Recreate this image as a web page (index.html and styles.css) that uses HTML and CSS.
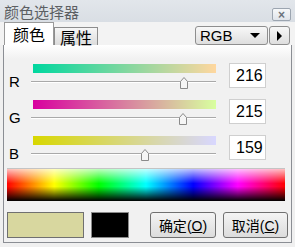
FILE: index.html
```html
<!DOCTYPE html>
<html>
<head>
    <link rel="stylesheet" href="styles.css">
</head>
<body>
    <div class="window">
        <div class="titlebar">
            <span class="title">颜色选择器</span>
            <button class="close-button">×</button>
        </div>

        <div class="tabbar">
            <div class="tab active">颜色</div>
            <div class="tab">属性</div>
            <div class="tab-fill"></div>
            <div class="mode-select">
                <span>RGB</span>
                <span class="caret"></span>
            </div>
            <div class="mode-next"><span class="play"></span></div>
        </div>

        <div class="panel">
            <div class="channels">
                <div class="channel">
                    <span class="channel-label">R</span>
                    <div class="slider">
                        <div class="ramp" style="background: linear-gradient(to right, rgb(0,215,159), rgb(255,215,159));"></div>
                        <div class="track">
                            <svg class="thumb" style="left: 149px;" viewBox="0 0 8 12"><path d="M0.5 4.5 L4 0.5 L7.5 4.5 V11.5 H0.5 Z"/></svg>
                        </div>
                    </div>
                    <div class="value">216</div>
                </div>
                <div class="channel">
                    <span class="channel-label">G</span>
                    <div class="slider">
                        <div class="ramp" style="background: linear-gradient(to right, rgb(216,0,159), rgb(216,255,159));"></div>
                        <div class="track">
                            <svg class="thumb" style="left: 148px;" viewBox="0 0 8 12"><path d="M0.5 4.5 L4 0.5 L7.5 4.5 V11.5 H0.5 Z"/></svg>
                        </div>
                    </div>
                    <div class="value">215</div>
                </div>
                <div class="channel">
                    <span class="channel-label">B</span>
                    <div class="slider">
                        <div class="ramp" style="background: linear-gradient(to right, rgb(216,215,0), rgb(216,215,255));"></div>
                        <div class="track">
                            <svg class="thumb" style="left: 110px;" viewBox="0 0 8 12"><path d="M0.5 4.5 L4 0.5 L7.5 4.5 V11.5 H0.5 Z"/></svg>
                        </div>
                    </div>
                    <div class="value">159</div>
                </div>
            </div>

            <div class="spectrum"></div>

            <div class="footer">
                <div class="swatch current" style="background: rgb(216,215,159);"></div>
                <div class="swatch previous" style="background: #000;"></div>
                <div class="buttons">
                    <button class="dialog-button ok">确定<span class="key">(<u>O</u>)</span></button>
                    <button class="dialog-button cancel">取消<span class="key">(<u>C</u>)</span></button>
                </div>
            </div>
        </div>
    </div>
</body>
</html>
```

FILE: styles.css
```css
body {
    margin: 0;
    font-family: "Noto Sans CJK SC", "Liberation Sans", sans-serif;
    background-color: #f0f0f0;
}
.window {
    width: 295px;
    height: 247px;
    overflow: hidden;
    background-color: #f0f0f0;
}
.titlebar {
    height: 22px;
    display: flex;
    align-items: flex-start;
    justify-content: space-between;
    background: linear-gradient(#e2e6eb, #d9dee4);
}
.title {
    margin: 2px 0 0 4px;
    font-size: 15px;
    line-height: 20px;
    color: #5c5f63;
}
.close-button {
    margin: 8px 4px 0 0;
    width: 19px;
    height: 13px;
    padding: 0;
    border: 1px solid #9ca5b0;
    border-radius: 2px;
    background: linear-gradient(#f6f8fa, #dfe4ea);
    color: #6b737c;
    font-family: "Liberation Sans", sans-serif;
    font-size: 12px;
    line-height: 10px;
    font-weight: bold;
}
.tabbar {
    height: 23px;
    display: flex;
    align-items: flex-end;
    padding: 0 5px 0 4px;
    background-color: #f3f3f3;
    margin-bottom: -1px;
    position: relative;
}
.tab {
    height: 18px;
    width: 44px;
    box-sizing: border-box;
    border: 1px solid #8d8d8d;
    border-bottom: none;
    background: linear-gradient(#f6f6f6, #dcdcdc);
    font-size: 16px;
    line-height: 18px;
    text-align: center;
    color: #000;
}
.tab.active {
    width: 50px;
    height: 23px;
    line-height: 22px;
    background: #fff;
    border-color: #9a9a9a;
    position: relative;
    z-index: 1;
}
.tab-fill {
    flex: 1;
}
.mode-select {
    width: 73px;
    height: 19px;
    margin-bottom: 0;
    box-sizing: border-box;
    border: 1px solid #8e8e8e;
    border-radius: 3px;
    background: linear-gradient(#f8f8f8, #dedede);
    display: flex;
    align-items: center;
    justify-content: space-between;
    padding: 0 7px 0 4px;
    font-family: "Liberation Sans", sans-serif;
    font-size: 15px;
}
.caret {
    width: 0;
    height: 0;
    border-left: 5px solid transparent;
    border-right: 5px solid transparent;
    border-top: 5px solid #000;
}
.mode-next {
    width: 21px;
    height: 19px;
    margin-left: 1px;
    box-sizing: border-box;
    border: 1px solid #8e8e8e;
    border-radius: 3px;
    background: linear-gradient(#f8f8f8, #dedede);
    display: flex;
    align-items: center;
    justify-content: center;
}
.play {
    width: 0;
    height: 0;
    border-top: 5px solid transparent;
    border-bottom: 5px solid transparent;
    border-left: 5px solid #000;
}
.panel {
    margin: 0 3px;
    height: 199px;
    box-sizing: border-box;
    border: 1px solid #8b8e94;
    background: linear-gradient(#ffffff 0, #f1f1f1 14px);
}
.channels {
    display: flex;
    flex-direction: column;
    gap: 11px;
    padding: 18px 0 0 5px;
}
.channel {
    display: grid;
    grid-template-columns: 11px 183px 37px;
    column-gap: 13px;
    height: 25px;
}
.channel-label {
    padding-top: 11px;
    font-family: "Liberation Sans", sans-serif;
    font-size: 15px;
    line-height: 16px;
}
.ramp {
    margin-top: 1px;
    height: 9px;
}
.track {
    position: relative;
    height: 10px;
    margin-left: -2px;
    border-bottom: 1px solid #fff;
    box-shadow: inset 0 -1px 0 #a9a9a9;
    box-sizing: border-box;
}
.thumb {
    position: absolute;
    top: 4px;
    width: 8px;
    height: 12px;
    fill: #f5f5f5;
    stroke: #8a8a8a;
    stroke-width: 1;
}
.value {
    box-sizing: border-box;
    height: 25px;
    border: 1px solid #cfcfcf;
    background: #fff;
    padding-left: 6px;
    font-family: "Liberation Sans", sans-serif;
    font-size: 16px;
    line-height: 23px;
}
.spectrum {
    margin: 8px 6px 0 3px;
    height: 33px;
    border-top: 1px solid #c4c4c4;
    box-sizing: border-box;
    background:
        linear-gradient(rgba(255,255,255,0.75) 0%, rgba(255,255,255,0) 45%, rgba(0,0,0,0) 55%, #000 100%),
        linear-gradient(to right, #f00 0%, #ff0 17%, #0f0 33%, #0ff 50%, #00f 67%, #f0f 83%, #f00 100%);
}
.footer {
    display: flex;
    align-items: center;
    margin: 11px 3px 0 3px;
}
.swatch {
    height: 26px;
    box-sizing: border-box;
    border: 1px solid #707070;
}
.swatch.current {
    width: 77px;
}
.swatch.previous {
    width: 38px;
    margin-left: 7px;
    border-color: #8a8a8a;
}
.buttons {
    margin-left: auto;
    display: flex;
    gap: 7px;
}
.dialog-button {
    height: 26px;
    width: 66px;
    padding: 0;
    border: 1px solid #707070;
    border-radius: 3px;
    background: linear-gradient(#f4f4f4, #dcdcdc);
    font-family: "Noto Sans CJK SC", sans-serif;
    font-size: 14px;
    color: #000;
}
.dialog-button.cancel {
    width: 65px;
}
.key {
    font-family: "Liberation Sans", sans-serif;
    font-size: 14px;
}
```
